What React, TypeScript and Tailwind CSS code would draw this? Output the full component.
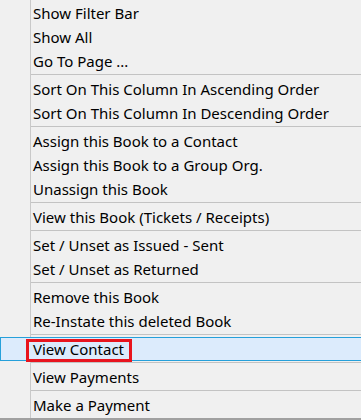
import React from "react";

type Entry = { t: "item"; label: string; active?: boolean } | { t: "sep" };

const entries: Entry[] = [
  { t: "item", label: "Show Filter Bar" },
  { t: "item", label: "Show All" },
  { t: "item", label: "Go To Page ..." },
  { t: "sep" },
  { t: "item", label: "Sort On This Column In Ascending Order" },
  { t: "item", label: "Sort On This Column In Descending Order" },
  { t: "sep" },
  { t: "item", label: "Assign this Book to a Contact" },
  { t: "item", label: "Assign this Book to a Group Org." },
  { t: "item", label: "Unassign this Book" },
  { t: "sep" },
  { t: "item", label: "View this Book (Tickets / Receipts)" },
  { t: "sep" },
  { t: "item", label: "Set / Unset as Issued - Sent" },
  { t: "item", label: "Set / Unset as Returned" },
  { t: "sep" },
  { t: "item", label: "Remove this Book" },
  { t: "item", label: "Re-Instate this deleted Book" },
  { t: "sep" },
  { t: "item", label: "View Contact", active: true },
  { t: "sep" },
  { t: "item", label: "View Payments" },
  { t: "sep" },
  { t: "item", label: "Make a Payment" },
];

function Gutter() {
  return (
    <>
      <div className="w-[30px] shrink-0" />
      <div className="w-px shrink-0 self-stretch bg-[#c9c9c9]" />
    </>
  );
}

export default function App() {
  return (
    <div
      className="w-[361px] h-[420px] overflow-hidden bg-[#f0f0f0] flex flex-col text-[15px] text-black"
      style={{ fontFamily: '"Noto Sans", "Open Sans", sans-serif' }}
    >
      <div className="h-px flex">
        <Gutter />
      </div>
      {entries.map((e, i) => {
        if (e.t === "sep") {
          return (
            <div key={i} className="h-[4px] flex">
              <Gutter />
              <div className="flex-1 flex flex-col">
                <div className="h-px" />
                <div className="h-px bg-[#c3c3c3]" />
              </div>
            </div>
          );
        }
        if (e.active) {
          return (
            <div
              key={i}
              className="relative h-6 w-[370px] shrink-0 flex items-center border border-[#26a0da] bg-[#dcebfc] pl-[32px] leading-none"
            >
              <span>{e.label}</span>
              <div className="absolute left-[25px] top-[1px] w-[106px] h-[23px] border-[3px] border-[#e8141e]" />
            </div>
          );
        }
        return (
          <div key={i} className="h-6 flex shrink-0">
            <Gutter />
            <div className="flex-1 flex items-center pl-[2px] leading-none whitespace-nowrap">
              {e.label}
            </div>
          </div>
        );
      })}
      <div className="h-px flex">
        <Gutter />
      </div>
      <div className="h-[2px] bg-[#a0a0a0]" />
    </div>
  );
}
